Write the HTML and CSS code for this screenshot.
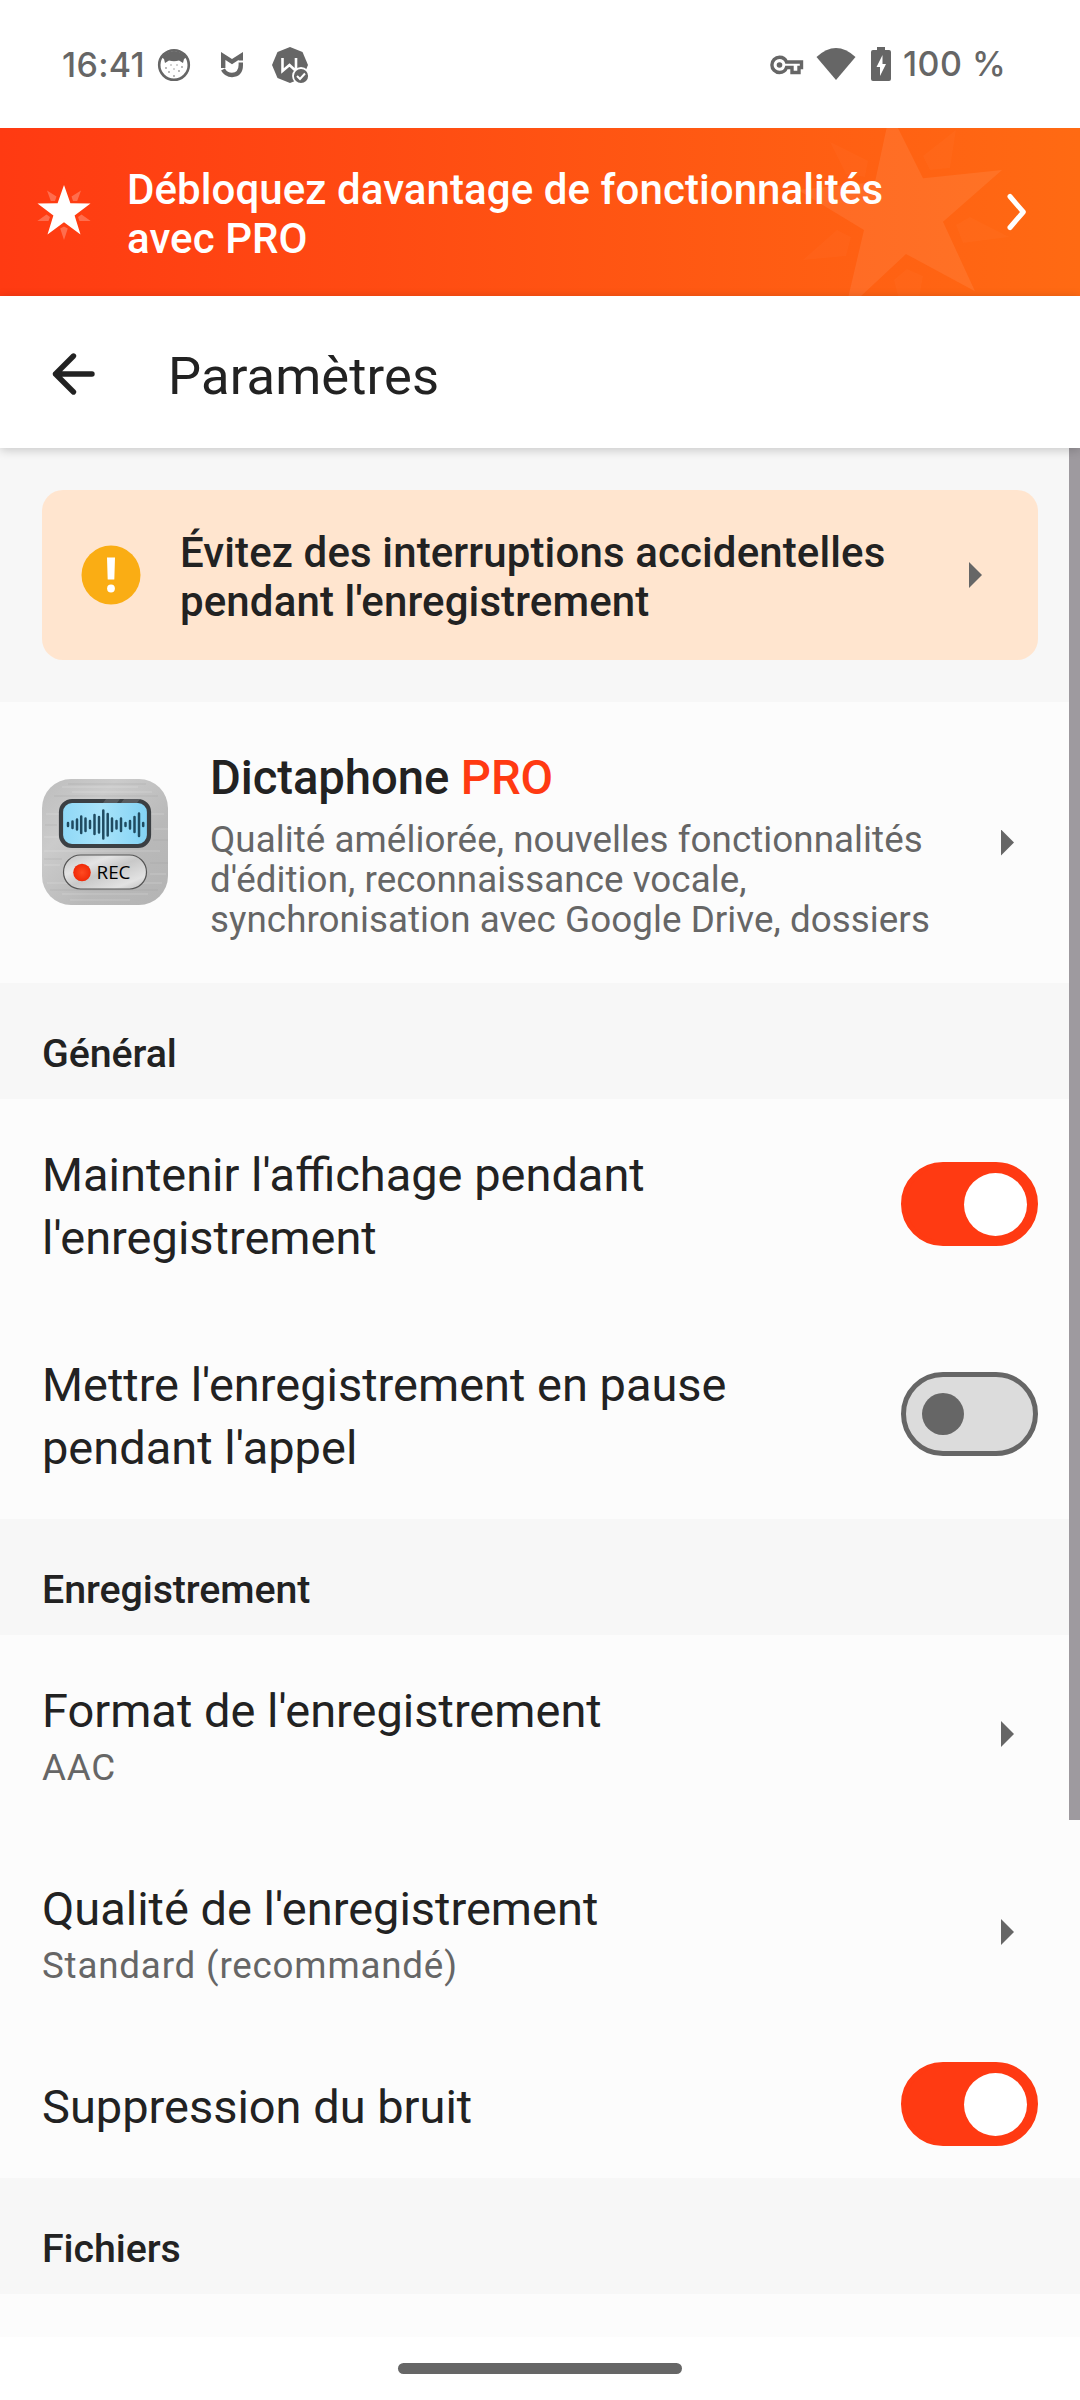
FILE: index.html
```html
<!DOCTYPE html>
<html lang="fr">
<head>
<meta charset="utf-8">
<title>Paramètres</title>
<link rel="stylesheet" href="styles.css">
</head>
<body>
<header class="status">
  <span class="clock">16:41</span>
  <svg class="st-face" width="34" height="34" viewBox="0 0 34 34"><circle cx="17" cy="17" r="14.8" fill="#fff" stroke="#666" stroke-width="2.6"/><path d="M4 9Q17-3 30 9L27 11L26 15L22 12.500Q17 14 12 12.500L8 15L7 11Z" fill="#666"/><g fill="#999"><circle cx="9" cy="20" r=".9"/><circle cx="14" cy="17" r=".8"/><circle cx="20" cy="17" r=".8"/><circle cx="25" cy="19" r=".9"/><circle cx="12" cy="24" r=".9"/><circle cx="17" cy="21" r=".8"/><circle cx="22" cy="23" r=".9"/><circle cx="17" cy="28" r=".9"/></g></svg>
  <svg class="st-mi" width="24" height="26" viewBox="0 0 24 26" fill="none" stroke="#666" stroke-width="4.4"><path d="M3.2 16V4L12 9.6L20.8 4V8.5"/><path d="M3 17.5Q6 23 12 23Q20.8 22.5 20.8 13V10.5"/></svg>
  <svg class="st-w" width="38" height="38" viewBox="0 0 38 38"><path d="M19 1L31.5 6L37 19L31.5 32L19 37L6.500 32L1 19L6.500 6Z" fill="#666"/><path d="M11.500 12V25L18.500 19L25 25V12" fill="none" stroke="#fff" stroke-width="2.600"/><circle cx="30" cy="30" r="8" fill="#666" stroke="#fff" stroke-width="1.800"/><path d="M26 30L29 33L34 27.500" fill="none" stroke="#fff" stroke-width="2"/></svg>
  <span class="grow"></span>
  <svg class="st-key" width="34" height="20" viewBox="0 0 34 20"><path d="M9.500 2.300C13 2.300 15.500 4.300 16.500 7H31.500V12.500H29V17.500H22V12.500H16.500C15.500 15.500 13 17.500 9.500 17.500A7.600 7.600 0 0 1 9.500 2.300Z" fill="none" stroke="#666" stroke-width="3.400"/><circle cx="9.500" cy="10" r="2.800" fill="#666"/></svg>
  <svg class="st-wifi" width="40" height="34" viewBox="0 0 40 34"><path d="M.5 10Q20-8 39.500 10L20 33Z" fill="#666"/></svg>
  <svg class="st-bat" width="20" height="34" viewBox="0 0 20 34"><path d="M6 0H14V3H18Q20 3 20 5V32Q20 34 18 34H2Q0 34 0 32V5Q0 3 2 3H6Z" fill="#666"/><path d="M11.500 8V17H15L9 29V20H5.500Z" fill="#fff"/></svg>
  <span class="charge">100 %</span>
</header>

<section class="banner">
  <svg class="banner-art" width="1080" height="168" viewBox="0 0 1080 168" fill="#fff"><path fill-opacity=".08" d="M890-16L923 50.300L1002 42L943 93.700L975 163.300L906 126L845 183L864 102L798 62L875 54Z"/><path fill-opacity=".025" d="M830 14L868 33L865 49L846 46ZM956 2L950 40L930 42L923 28ZM1009 109L963 115L956 97L970 89ZM894 152L907 141L923 148L918 176H900ZM803 132L837 102L851 109L846 128Z"/></svg>
  <svg class="star" width="54" height="56" viewBox="0 0 54 56" fill="#fff"><path d="M27 1L33.400 19.300L53.500 19.500L37.600 31.500L43.500 50.500L27 38.300L10.500 50.500L16.400 31.500L.5 19.500L20.600 19.300Z"/><path fill-opacity=".25" d="M10 6.500L19.500 12.500L18 17H13.800ZM44 6.500L34.500 12.500L36 17H40.200ZM.3 37L9.500 30.500L13 33L11.500 37ZM53.700 37L44.500 30.500L41 33L42.500 37ZM23.200 44.500L27 42.500L30.800 44.500L27 56Z"/></svg>
  <p class="banner-text">Débloquez davantage de fonctionnalités<br>avec PRO</p>
  <svg class="chevron" width="24" height="42" viewBox="0 0 24 42" fill="none" stroke="#fff" stroke-width="5" stroke-linecap="round" stroke-linejoin="round"><path d="M5 5.500L18.300 21L5 36.500"/></svg>
</section>

<nav class="appbar">
  <svg class="back" width="46" height="46" viewBox="0 0 46 46" fill="none" stroke="#222" stroke-width="5.400" stroke-linecap="round" stroke-linejoin="round"><path d="M42 23H5.500M23.500 5L5.500 23L23.500 41"/></svg>
  <h1>Paramètres</h1>
</nav>

<main class="list">
  <div class="scrollbar"></div>
  <div class="notice-wrap">
    <div class="notice">
      <svg class="warn" width="60" height="60" viewBox="0 0 60 60"><circle cx="30" cy="30" r="29.500" fill="#faad14"/><path d="M26 12.500H34L33.300 34.500H26.700Z" fill="#fff"/><circle cx="30" cy="43.500" r="3.900" fill="#fff"/></svg>
      <p>Évitez des interruptions accidentelles<br>pendant l'enregistrement</p>
      <i class="arrow"></i>
    </div>
  </div>

  <div class="row pro">
    <svg class="app" width="126" height="126" viewBox="0 0 126 126">
      <defs>
        <linearGradient id="metal" x1="0" y1="0" x2="1" y2="1"><stop offset="0" stop-color="#bdbdbd"/><stop offset=".3" stop-color="#cbcbcb"/><stop offset=".65" stop-color="#b9b9b9"/><stop offset="1" stop-color="#b4b4b4"/></linearGradient>
        <linearGradient id="button" x1="0" y1="0" x2="1" y2="1"><stop offset="0" stop-color="#c2c2c2"/><stop offset=".3" stop-color="#e4e4e4"/><stop offset=".5" stop-color="#c8c8c8"/><stop offset=".8" stop-color="#e2e2e2"/><stop offset="1" stop-color="#bbb"/></linearGradient>
        <linearGradient id="screen"><stop offset="0" stop-color="#8fd8f6"/><stop offset=".45" stop-color="#a8e3fa"/><stop offset="1" stop-color="#82d2f4"/></linearGradient>
        <radialGradient id="dot"><stop offset="0" stop-color="#ff4a20"/><stop offset="1" stop-color="#f02a08"/></radialGradient>
      </defs>
      <rect width="126" height="126" rx="29" fill="url(#metal)"/>
      <path d="M20 8H96M30 13H110M4 35H122M2 58H16M112 50H126M2 72H118M2 86H18M108 95H124M5 104H120M20 115H106M28 121H88" stroke="#fff" stroke-opacity=".22" stroke-width="1"/>
      <path d="M26 5H104M12 17H116M3 46H15M111 61H126M2 80H20M108 84H126M8 111H116" stroke="#888" stroke-opacity=".2" stroke-width="1"/>
      <rect x="19" y="22" width="88" height="45" rx="11" fill="url(#screen)" stroke="#3b3f43" stroke-width="4.200"/>
      <path d="M64 20H78L75 24H61ZM82 20H98L95 24H79Z" fill="#fff" fill-opacity=".15"/>
      <path d="M26 44V47M30.500 42.500V49M35 40.500V50.500M39.200 37.500V54M43.500 39.500V52M48 42V49M52.500 36V55M57 38V53.500M61.300 31.500V59.500M65.700 35V56.500M70 39.500V52M74.500 42V49.500M79 39.500V52M83.500 44V47M88 42V49.500M92.500 38V53M97 34.500V57M101.200 44V47" stroke="#1f4b61" stroke-width="2.500" stroke-linecap="round"/>
      <rect x="21.500" y="76" width="83" height="34" rx="17" fill="url(#button)" stroke="#555" stroke-width="1.200"/>
      <circle cx="40" cy="93.500" r="8.800" fill="url(#dot)"/>
      <text class="rec" x="54.500" y="100" textLength="34" lengthAdjust="spacingAndGlyphs">REC</text>
    </svg>
    <div class="pro-text">
      <h2>Dictaphone <span>PRO</span></h2>
      <p>Qualité améliorée, nouvelles fonctionnalités<br>d'édition, reconnaissance vocale,<br>synchronisation avec Google Drive, dossiers</p>
    </div>
    <i class="arrow"></i>
  </div>

  <h3>Général</h3>
  <div class="row two">
    <p class="label">Maintenir l'affichage pendant<br>l'enregistrement</p>
    <span class="toggle on"></span>
  </div>
  <div class="row two">
    <p class="label">Mettre l'enregistrement en pause<br>pendant l'appel</p>
    <span class="toggle"></span>
  </div>

  <h3>Enregistrement</h3>
  <div class="row choice">
    <div class="label">Format de l'enregistrement<small>AAC</small></div>
    <i class="arrow"></i>
  </div>
  <div class="row choice">
    <div class="label">Qualité de l'enregistrement<small>Standard (recommandé)</small></div>
    <i class="arrow"></i>
  </div>
  <div class="row single">
    <p class="label">Suppression du bruit</p>
    <span class="toggle on"></span>
  </div>

  <h3>Fichiers</h3>
</main>

<footer class="gesture"><span></span></footer>
</body>
</html>
```
FILE: styles.css
```css
* { box-sizing: border-box; margin: 0; padding: 0; }
body {
  width: 1080px;
  height: 2400px;
  display: flex;
  flex-direction: column;
  overflow: hidden;
  background: #fff;
  color: #222;
  font-family: Roboto, sans-serif;
}
svg { display: block; flex: none; }

.status {
  height: 128px;
  flex: none;
  display: flex;
  align-items: center;
  padding: 2px 76px 0 60px;
  color: #666;
  font: 450 34px/40px Inter, sans-serif;
}
.clock { width: 97px; padding-left: 2px; letter-spacing: .3px; white-space: nowrap; }
.st-mi { margin-left: 29px; }
.st-w { margin-left: 27px; }
.grow { flex: 1; }
.st-wifi { margin: -3px 15px 0 12px; }
.st-bat { margin-top: -3px; }
.charge { width: 101px; margin: -2px 0 0 12px; letter-spacing: .5px; white-space: nowrap; }

.banner {
  position: relative;
  height: 168px;
  flex: none;
  display: flex;
  align-items: center;
  padding: 0 51px 0 37px;
  background: linear-gradient(90deg, #ff3a12, #ff6a13);
  color: #fff;
}
.banner-art { position: absolute; left: 0; top: 0; }
.banner-text {
  position: relative;
  flex: 1;
  margin-left: 36px;
  padding-top: 3px;
  font-weight: 500;
  font-size: 42px;
  line-height: 49px;
  letter-spacing: .08px;
}
.chevron, .star { position: relative; }

.appbar {
  position: relative;
  z-index: 2;
  height: 152px;
  flex: none;
  display: flex;
  align-items: center;
  padding-left: 50px;
  background: #fff;
  box-shadow: 0 2px 10px rgba(0, 0, 0, .2);
}
.back { margin-top: 4px; }
.appbar h1 {
  margin-left: 72px;
  padding-top: 8px;
  font-weight: 400;
  font-size: 52.5px;
  line-height: 62px;
  letter-spacing: .12px;
}

.list {
  position: relative;
  height: 1889px;
  flex: none;
  background: #fcfcfc;
}
.scrollbar {
  position: absolute;
  z-index: 1;
  right: 0;
  top: 0;
  width: 11px;
  height: 1372px;
  background: #9e9a9f;
}
.notice-wrap { padding: 42px; background: #f7f7f7; }
.notice {
  height: 170px;
  display: flex;
  align-items: center;
  padding: 0 56px 0 39px;
  border-radius: 21px;
  background: #ffe5cf;
}
.notice p {
  flex: 1;
  margin-left: 39px;
  padding-top: 4px;
  font-weight: 500;
  font-size: 42px;
  line-height: 49px;
  letter-spacing: .12px;
}
.arrow {
  width: 13px;
  height: 26px;
  flex: none;
  background: #666;
  clip-path: polygon(0 0, 100% 50%, 0 100%);
}

.row { display: flex; align-items: center; padding: 0 42px; }
.row > .arrow { margin-right: 24px; }
.pro { height: 281px; }
.app { margin-bottom: 1px; }
.pro-text { flex: 1; align-self: flex-start; margin-left: 42px; padding-top: 46px; }
.pro-text h2 { font-weight: 500; font-size: 47.25px; line-height: 60px; letter-spacing: -.08px; }
.pro-text span { color: #ff3a12; }
.pro-text p { margin-top: 12px; color: #666; font-size: 36.75px; line-height: 40px; letter-spacing: .06px; white-space: nowrap; }
.rec { font: 500 18px "Open Sans", sans-serif; fill: #000; }

.list h3 {
  height: 116px;
  padding: 47px 42px 0;
  background: #f7f7f7;
  font-weight: 500;
  font-size: 39.375px;
  line-height: 47px;
  letter-spacing: -.08px;
}
.two { height: 210px; }
.choice { height: 198px; }
.single { height: 147px; }
.label { flex: 1; padding-top: 3px; font-size: 46.98px; line-height: 63px; }
.label small { display: block; padding-top: 1px; color: #666; font-size: 36.75px; line-height: 50px; letter-spacing: .8px; }
.single .toggle { margin-bottom: 1px; }

.toggle {
  width: 137px;
  height: 84px;
  flex: none;
  display: flex;
  align-items: center;
  padding-left: 16px;
  border: 5px solid #666;
  border-radius: 42px;
  background: #dcdcdc;
}
.toggle::before { content: ""; width: 42px; height: 42px; flex: none; border-radius: 50%; background: #666; }
.toggle.on { padding-left: 58px; background: #ff3a12; border-color: #ff3a12; }
.toggle.on::before { width: 63px; height: 63px; background: #fff; }

.gesture { flex: 1; display: flex; justify-content: center; padding-top: 26px; }
.gesture span { width: 284px; height: 11px; border-radius: 5.500px; background: #666; }
```
